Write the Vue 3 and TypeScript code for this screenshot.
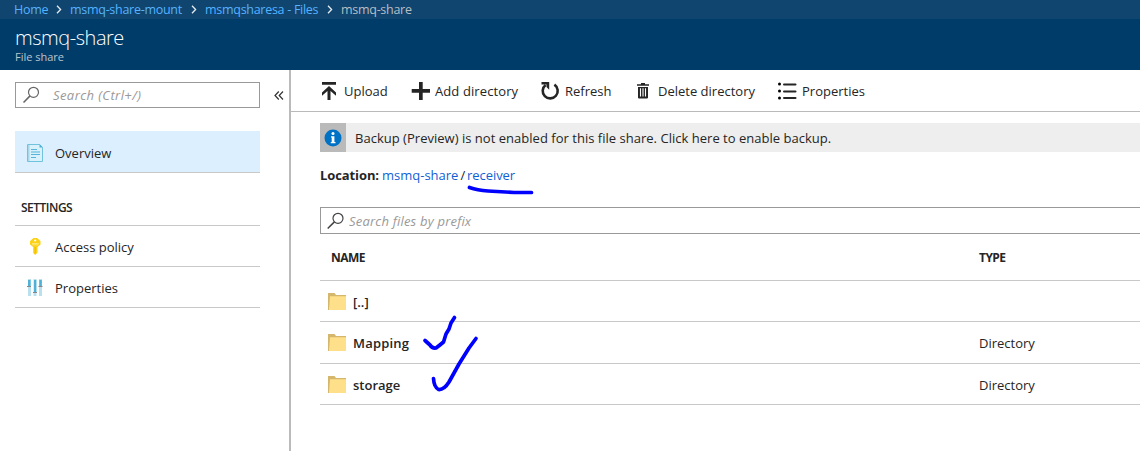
<script setup lang="ts">
interface Crumb { label: string; cls: string }
interface Row { name: string; type: string; cls: string }

const crumbs: Crumb[] = [
  { label: 'Home', cls: 'c-home' },
  { label: 'msmq-share-mount', cls: 'c-mount' },
  { label: 'msmqsharesa - Files', cls: 'c-files' },
]
const rows: Row[] = [
  { name: '[..]', type: '', cls: 'up' },
  { name: 'Mapping', type: 'Directory', cls: 'mapping' },
  { name: 'storage', type: 'Directory', cls: 'storage' },
]
</script>

<template>
  <div class="page">
    <nav class="crumbs">
      <template v-for="c in crumbs" :key="c.label">
        <a :class="['crumb', c.cls]">{{ c.label }}</a>
        <svg class="sep" width="6" height="9" viewBox="0 0 6 9"><path d="M1 .8 4.6 4.5 1 8.2" fill="none" stroke="#e4ebf1" stroke-width="1.3" /></svg>
      </template>
      <span class="crumb current">msmq-share</span>
    </nav>
    <header class="head">
      <h1>msmq-share</h1>
      <p>File share</p>
    </header>

    <div class="body">
      <aside class="side">
        <div class="side-top">
          <div class="search">
            <svg width="18" height="18" viewBox="0 0 18 18"><circle cx="10.5" cy="6.3" r="5" fill="none" stroke="#666" stroke-width="1.2" /><path d="M7 9.900.5 16.500" stroke="#666" stroke-width="1.5" /></svg>
            <span class="t-ctrl">Search (Ctrl+/)</span>
          </div>
          <svg class="collapse" width="10" height="9" viewBox="0 0 10 9"><path d="M4.8.5 1 4.5l3.8 4M9 .5 5.2 4.5 9 8.5" fill="none" stroke="#333" stroke-width="1.2" /></svg>
        </div>
        <div class="item active">
          <svg width="16" height="18" viewBox="0 0 16 18"><path d="M.5.5h12l3 3v14H.5z" fill="#d9f1fa" stroke="#72c2dd" /><path d="M1 1h1.500v16H1z" fill="#a5d9ea" /><path d="M12.500 0v3.500H16z" fill="#4bb2d5" /><path d="M4 5.500h6M4 8h9M4 10.500h9M4 13.500h5" stroke="#59b4d9" stroke-width="1.100" /></svg>
          <span>Overview</span>
        </div>
        <h2>SETTINGS</h2>
        <div class="item">
          <svg width="16" height="18" viewBox="0 0 16 18"><path d="M6.500 0h3.500L13.500 3v3.500L10.500 9v5.500L8.200 17 6.200 15V9L3 6.500V3z" fill="#fcd116" /><circle cx="8.200" cy="2.500" r="1.100" fill="#fff" /><path d="M5 5.500h6.500M5 6.800h6.500" stroke="#fff0a0" stroke-width=".7" /><path d="M8.200 9v6.500" stroke="#eab900" stroke-width=".8" /></svg>
          <span>Access policy</span>
        </div>
        <div class="item">
          <svg width="16" height="18" viewBox="0 0 16 18"><path d="M1 0h3v17H1zM6.500 0h3v17h-3zM12 0h3v17h-3z" fill="#b8e0ef" /><path d="M1 1h2.500v6H1zM7 1h2.300v12H7zM12.300 1h2.500v6h-2.500z" fill="#4fb1d6" /><path d="M0 7.500h4M6 13.500h4M11.500 7.500h4" stroke="#888" stroke-width="1.200" /></svg>
          <span>Properties</span>
        </div>
      </aside>

      <main class="main">
        <div class="toolbar">
          <button class="upload"><svg width="16" height="20" viewBox="0 0 16 20"><path d="M1 1h14v2.700H1zM8 5l7 6.500v3.200l-5.500-4.700V19h-3v-9L1 14.700v-3.200z" fill="#252525" /></svg><span>Upload</span></button>
          <button class="add"><svg width="20" height="20" viewBox="0 0 20 20"><path d="M8 1h3.700v7H19v3.700h-7.300V19H8v-7.300H.700V8H8z" fill="#252525" /></svg><span>Add directory</span></button>
          <button class="refresh"><svg width="20" height="20" viewBox="0 0 20 20"><path d="M14.400 3.700A7.500 7.500 0 1 1 5.600 4" fill="none" stroke="#252525" stroke-width="2.600" /><path d="M1.500 1h7.700v7.700L6.500 6V3.500H1.500z" fill="#252525" /></svg><span>Refresh</span></button>
          <button class="delete"><svg width="14" height="18" viewBox="0 0 14 18"><path d="M5 1h4v1.200h4v1.600H1V2.200h4zM2 5h10v10.500q0 1-1 1H3q-1 0-1-1z" fill="#252525" /><path d="M4.500 6.200v8.300M7 6.200v8.300M9.500 6.200v8.300" stroke="#fff" stroke-width="1.100" /></svg><span>Delete directory</span></button>
          <button class="props"><svg width="20" height="18" viewBox="0 0 20 18"><path d="M7 2.500h11.500M7 9.500h11.500M7 16h11.500" stroke="#252525" stroke-width="2" stroke-linecap="round" /><circle cx="2.500" cy="2" r="1.500" /><circle cx="2.500" cy="9" r="1.500" /><circle cx="2.500" cy="16" r="1.500" /></svg><span>Properties</span></button>
        </div>

        <div class="notice">
          <div class="info"><svg width="18" height="18" viewBox="0 0 18 18"><circle cx="9" cy="9" r="8.500" fill="#0072c6" /><circle cx="9" cy="4.600" r="1.500" fill="#fff" /><path d="M7 7.300h3.400v5.700h1.100v1.300H6.800V13h.900V8.600H7z" fill="#fff" /></svg></div>
          <span class="t-notice">Backup (Preview) is not enabled for this file share. Click here to enable backup.</span>
        </div>

        <div class="location">
          <b>Location:</b><a class="l-share">msmq-share</a><i>/</i><a class="l-recv">receiver</a>
        </div>

        <div class="search prefix">
          <svg width="18" height="18" viewBox="0 0 18 18"><circle cx="11" cy="6.3" r="5" fill="none" stroke="#444" stroke-width="1.2" /><path d="M7.4 9.900.7 16.500" stroke="#444" stroke-width="1.5" /></svg>
          <span class="t-prefix">Search files by prefix</span>
        </div>

        <div class="grid">
          <div class="row headrow"><span class="h-name">NAME</span><span>TYPE</span></div>
          <div v-for="r in rows" :key="r.name" :class="['row', r.cls]">
            <div class="name">
              <svg width="18" height="18" viewBox="0 0 18 18"><path d="M0 0h6.500l1.500 2h10v15H0z" fill="#d4b76c" /><path d="M2 3.200h16v13.800H1z" fill="#ffe08a" /></svg>
              <span>{{ r.name }}</span>
            </div>
            <span class="type">{{ r.type }}</span>
          </div>
        </div>
      </main>
    </div>

    <svg class="ink" width="1140" height="451" viewBox="0 0 1140 451">
      <g fill="none" stroke="#00f" stroke-width="3.7" stroke-linecap="round" stroke-linejoin="round">
        <path d="M469.500 187.500C475 189.500 480 190.500 488 191L514 192.500H531.500" />
        <path d="M425 340.500L430 345Q432 348.500 436 348Q440 345 443.500 342L446 334L449 329L451 323L454.500 317.500" />
        <path d="M433.500 378.500Q434 387 438.500 389.500Q444 390 449 382L459 364L469 348L476 338.500" />
      </g>
    </svg>
  </div>
</template>

<style>
body { margin: 0; background: #fff; overflow: hidden; }
</style>

<style scoped>
.page { position: relative; width: 1140px; height: 451px; overflow: hidden; background: #fff; color: #252525; font: 13px/18px "Open Sans", "Noto Sans", sans-serif; white-space: nowrap; }
.crumbs { display: flex; align-items: center; height: 19px; padding-left: 14px; background: #104570; box-sizing: border-box; font-size: 12.5px; letter-spacing: -.28px; }
.crumb { color: #55b3ff; }
.crumb.c-home { width: 33px; }
.crumb.c-mount { width: 112px; }
.crumb.c-files { width: 113px; }
.crumb.current { color: #b9bec3; }
.sep { margin: 0 8px 0 9px; }
.head { height: 51px; background: #003c6a; padding-left: 15px; box-sizing: border-box; overflow: hidden; }
h1 { margin: 7px 0 0; font-size: 20px; line-height: 24px; font-weight: 300; color: #fff; letter-spacing: -.46px; }
.head p { margin: 0; font-size: 11px; line-height: 14px; color: #bac5ce; font-weight: 500; }
.body { display: flex; height: 381px; }
.side { width: 291px; border-right: 2px solid #bababa; padding: 12px 0 0 15px; box-sizing: border-box; flex: none; }
.side-top { display: flex; align-items: center; margin-bottom: 23px; }
.search { display: flex; align-items: center; box-sizing: border-box; width: 245px; height: 26px; border: 1px solid #999; padding-left: 7px; color: #999; font-style: italic; }
.search svg { margin-right: 12px; flex: none; }
.t-ctrl { letter-spacing: .42px; }
.t-prefix { letter-spacing: .2px; }
.collapse { margin-left: 14px; }
.item { display: flex; align-items: center; width: 245px; height: 41px; box-sizing: border-box; border-bottom: 1px solid #c8c8c8; padding: 2px 0 0 12px; }
.item svg { margin-right: 12px; flex: none; }
.item.active { height: 42px; background: #dcefff; }
h2 { width: 245px; height: 53px; box-sizing: border-box; margin: 0; padding: 26px 0 0 6px; border-bottom: 1px solid #c8c8c8; font-size: 12px; line-height: 18px; font-weight: 600; letter-spacing: -.5px; }
.main { flex: 1; min-width: 0; }
.toolbar { display: flex; align-items: center; height: 42px; box-sizing: border-box; border-bottom: 1px solid #bababa; padding-left: 30px; }
button { display: flex; align-items: center; border: 0; padding: 0; background: none; color: inherit; font: inherit; flex: none; }
button svg { flex: none; }
.upload { width: 90px; }
.upload svg { margin-right: 7px; }
.add { width: 129px; letter-spacing: .1px; }
.add svg { margin-right: 4px; }
.refresh { width: 96px; }
.refresh svg { margin-right: 5px; }
.delete { width: 141px; }
.delete svg { margin-right: 8px; }
.props svg { margin-right: 5px; }
.notice { display: flex; align-items: center; height: 29px; margin: 11px 0 0 29px; background: #eee; }
.info { display: flex; align-items: center; justify-content: center; width: 26px; height: 29px; background: #bababa; margin-right: 9px; }
.t-notice { letter-spacing: .02px; }
.location { display: flex; margin: 14px 0 0 29px; height: 18px; }
.location b { width: 62px; letter-spacing: -.1px; }
.location a { color: #0f5fd6; }
.location .l-share { width: 77px; }
.location .l-recv { letter-spacing: -.05px; }
.location i { font-style: normal; width: 8px; text-align: center; }
.search.prefix { width: 830px; height: 27px; margin: 23px 0 0 29px; padding-left: 6px; }
.search.prefix svg { margin-right: 4px; }
.grid { margin-left: 29px; }
.row { display: flex; align-items: center; height: 41px; box-sizing: border-box; border-bottom: 1px solid #c8c8c8; padding-left: 8px; }
.row.mapping { height: 42px; }
.row.mapping .name { letter-spacing: .2px; }
.row.up, .row.storage { padding-top: 2px; }
.row.up { padding-top: 1px; }
.headrow { height: 47px; padding-top: 2px; font-size: 12px; font-weight: 700; padding-left: 11px; letter-spacing: -.55px; }
.h-name { width: 648px; }
.name { display: flex; align-items: center; width: 651px; font-weight: 600; }
.name svg { margin-right: 7px; flex: none; }
.ink { position: absolute; inset: 0; pointer-events: none; }
</style>
